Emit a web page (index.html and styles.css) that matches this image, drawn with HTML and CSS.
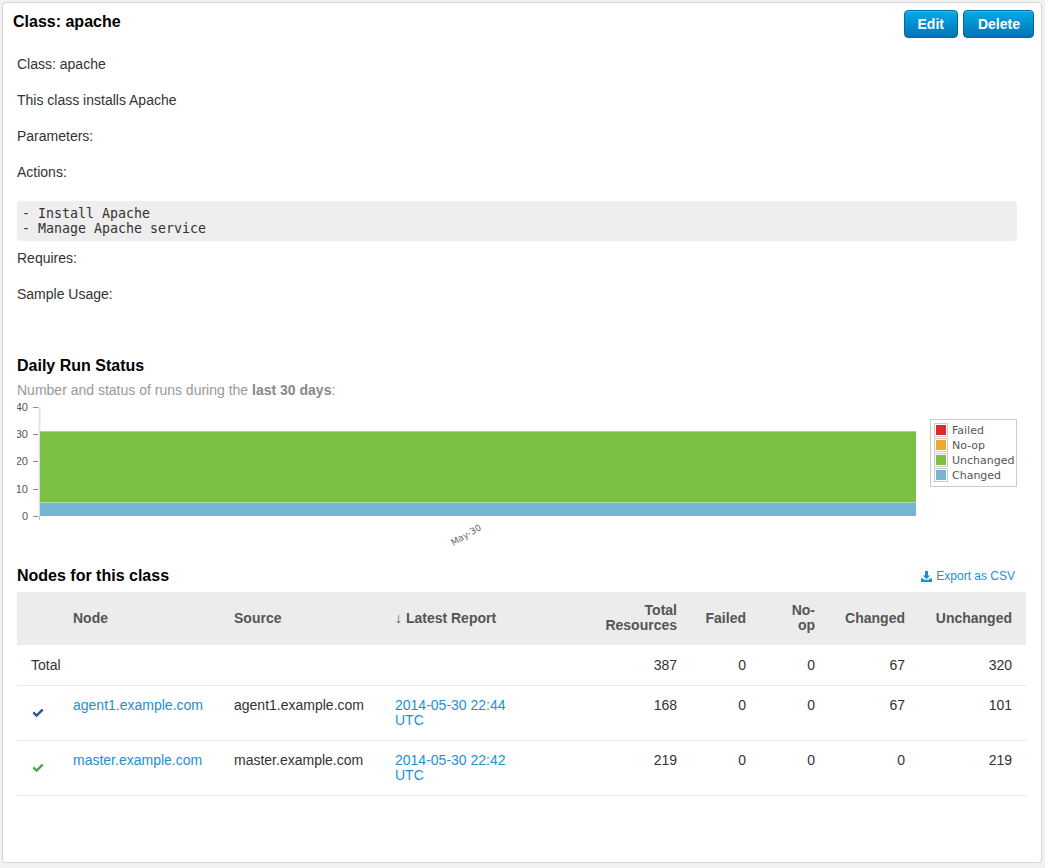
FILE: index.html
```html
<!DOCTYPE html>
<html>
<head>
<meta charset="utf-8">
<title>Class: apache</title>
<link rel="stylesheet" href="styles.css">
</head>
<body>
<div class="panel">
  <div class="panel-head">
    <h2 class="title">Class: apache</h2>
    <div class="actions">
      <a class="btn" href="#">Edit</a>
      <a class="btn btn-del" href="#">Delete</a>
    </div>
  </div>
  <div class="panel-body">
    <p>Class: apache</p>
    <p>This class installs Apache</p>
    <p>Parameters:</p>
    <p>Actions:</p>
    <pre class="code">- Install Apache
- Manage Apache service</pre>
    <p>Requires:</p>
    <p>Sample Usage:</p>

    <h3 class="section-title first">Daily Run Status</h3>
    <p class="sub">Number and status of runs during the <strong>last 30 days</strong>:</p>
    <svg class="chart" width="1009" height="150" viewBox="0 0 1009 150">
      <g class="ylabels">
        <text x="11" y="11">40</text>
        <text x="11" y="38">30</text>
        <text x="11" y="65">20</text>
        <text x="11" y="93">10</text>
        <text x="11" y="120">0</text>
      </g>
      <g stroke="#888" stroke-width="1">
        <line x1="16" x2="21" y1="7.5" y2="7.5"/>
        <line x1="16" x2="21" y1="34.5" y2="34.5"/>
        <line x1="16" x2="21" y1="61.5" y2="61.5"/>
        <line x1="16" x2="21" y1="89.5" y2="89.5"/>
        <line x1="16" x2="21" y1="116.5" y2="116.5"/>
      </g>
      <line x1="22.5" x2="22.5" y1="7" y2="119" stroke="#e2e2e2" stroke-width="2"/>
      <rect x="23" y="31" width="876" height="85" fill="#7ac043"/>
      <line x1="23" x2="899" y1="31.5" y2="31.5" stroke="#a9d685" stroke-width="1"/>
      <rect x="23" y="102" width="876" height="14" fill="#75b5d2"/>
      <line x1="23" x2="899" y1="102.5" y2="102.5" stroke="#b4d9b7" stroke-width="1"/>
      <line x1="22.5" x2="22.5" y1="116" y2="120" stroke="#bbb" stroke-width="1"/>
      <text class="xlabel" x="449" y="138" transform="rotate(-30 449 135)">May-30</text>
      <g class="legend">
        <rect x="913.5" y="19.5" width="86" height="67" fill="#fff" stroke="#ccc"/>
        <rect x="917.5" y="23.5" width="13" height="13" fill="#fff" stroke="#ccc"/>
        <rect x="919" y="25" width="10" height="10" fill="#dd2c2c"/>
        <rect x="917.5" y="38.5" width="13" height="13" fill="#fff" stroke="#ccc"/>
        <rect x="919" y="40" width="10" height="10" fill="#f0a92e"/>
        <rect x="917.5" y="53.5" width="13" height="13" fill="#fff" stroke="#ccc"/>
        <rect x="919" y="55" width="10" height="10" fill="#7ac043"/>
        <rect x="917.5" y="68.5" width="13" height="13" fill="#fff" stroke="#ccc"/>
        <rect x="919" y="70" width="10" height="10" fill="#75b5d2"/>
        <text x="935" y="34">Failed</text>
        <text x="935" y="49">No-op</text>
        <text x="935" y="64">Unchanged</text>
        <text x="935" y="79">Changed</text>
      </g>
    </svg>

    <div class="nodes-head">
      <h3 class="section-title">Nodes for this class</h3>
      <a class="export" href="#"><svg width="11" height="11" viewBox="0 0 11 11"><path d="M4 0h3v4.5h2.2L5.5 8.3 1.8 4.5H4z" fill="#1e90d0"/><path d="M0 7.5h2.2l1 1.2h4.6l1-1.2H11V11H0z" fill="#1e90d0"/></svg>Export as CSV</a>
    </div>

    <table class="nodes">
      <colgroup>
        <col class="c-icon"><col class="c-node"><col class="c-src"><col class="c-rep"><col class="c-tot"><col class="c-f"><col class="c-n"><col class="c-c"><col class="c-u">
      </colgroup>
      <thead>
        <tr>
          <th></th>
          <th>Node</th>
          <th>Source</th>
          <th>↓ Latest Report</th>
          <th class="num">Total<br>Resources</th>
          <th class="num">Failed</th>
          <th class="num">No-<br>op</th>
          <th class="num">Changed</th>
          <th class="num">Unchanged</th>
        </tr>
      </thead>
      <tbody>
        <tr class="total-row">
          <td colspan="4" class="total">Total</td>
          <td class="num">387</td>
          <td class="num">0</td>
          <td class="num">0</td>
          <td class="num">67</td>
          <td class="num">320</td>
        </tr>
        <tr>
          <td class="icon"><svg class="check blue" width="12" height="10" viewBox="0 0 12 10"><path d="M0.5 5.2 2.2 3.5 4.6 5.9 9.8 0.7 11.5 2.4 4.6 9.3z"/></svg></td>
          <td><a href="#">agent1.example.com</a></td>
          <td>agent1.example.com</td>
          <td><a href="#">2014-05-30 22:44<br>UTC</a></td>
          <td class="num">168</td>
          <td class="num">0</td>
          <td class="num">0</td>
          <td class="num">67</td>
          <td class="num">101</td>
        </tr>
        <tr>
          <td class="icon"><svg class="check green" width="12" height="10" viewBox="0 0 12 10"><path d="M0.5 5.2 2.2 3.5 4.6 5.9 9.8 0.7 11.5 2.4 4.6 9.3z"/></svg></td>
          <td><a href="#">master.example.com</a></td>
          <td>master.example.com</td>
          <td><a href="#">2014-05-30 22:42<br>UTC</a></td>
          <td class="num">219</td>
          <td class="num">0</td>
          <td class="num">0</td>
          <td class="num">0</td>
          <td class="num">219</td>
        </tr>
      </tbody>
    </table>
  </div>
</div>
</body>
</html>
```

FILE: styles.css
```css
html, body {
  margin: 0;
  padding: 0;
  background: #f1f1f1;
}
body {
  padding: 2px 0 0 2px;
  font-family: "Liberation Sans", Arial, sans-serif;
  font-size: 14px;
  color: #333;
}
.panel {
  width: 1038px;
  height: 859px;
  background: #fff;
  border: 1px solid #d6d6d6;
  border-radius: 4px;
}
.panel-head {
  display: flex;
  justify-content: space-between;
  align-items: flex-start;
  padding: 7px 7px 0 10px;
}
.title {
  margin: 0;
  font-size: 16px;
  line-height: 24px;
  font-weight: bold;
  color: #000;
}
.actions {
  display: flex;
  gap: 5px;
}
.btn {
  display: block;
  height: 26px;
  line-height: 26px;
  padding: 0 13px;
  border: 1px solid #0469a3;
  border-radius: 4px;
  background: linear-gradient(#03aaea, #0274b4);
  color: #fff;
  font-weight: bold;
  font-size: 14px;
  text-decoration: none;
  box-shadow: inset 0 1px 0 rgba(255,255,255,0.2);
}
.btn-del {
  padding: 0 13px 0 14px;
}
.panel-body {
  padding: 16px 15px 0 14px;
}
p {
  margin: 0 0 16px;
  line-height: 20px;
}
.code {
  margin: 19px 9px 7px 0;
  padding: 5px 5px;
  background: #eee;
  border-radius: 4px;
  font-family: "DejaVu Sans Mono", "Liberation Mono", monospace;
  font-size: 13.3px;
  line-height: 15px;
  color: #333;
}
.section-title {
  margin: 0;
  font-size: 16px;
  line-height: 20px;
  font-weight: bold;
  color: #000;
}
.section-title.first {
  margin-top: 52px;
}
.sub {
  margin: 4px 0 0;
  color: #999;
}
.sub strong {
  color: #888;
}
.chart {
  display: block;
  margin-top: 0;
}
.ylabels text {
  font-family: "Liberation Sans", Arial, sans-serif;
  font-size: 11px;
  fill: #555;
  text-anchor: end;
}
.xlabel {
  font-family: "DejaVu Sans", sans-serif;
  font-size: 9px;
  fill: #666;
  text-anchor: middle;
}
.legend text {
  font-family: "DejaVu Sans", sans-serif;
  font-size: 11px;
  fill: #555;
}
.nodes-head {
  display: flex;
  justify-content: space-between;
  align-items: center;
  margin-top: 16px;
  padding-right: 11px;
}
.export {
  display: flex;
  align-items: center;
  gap: 4px;
  color: #1e90d0;
  font-size: 12px;
  text-decoration: none;
}
.nodes {
  width: 1009px;
  margin-top: 6px;
  border-collapse: collapse;
  table-layout: fixed;
}
.c-icon { width: 48px; }
.c-node { width: 161px; }
.c-src { width: 161px; }
.c-rep { width: 138px; }
.c-tot { width: 160px; }
.c-f { width: 69px; }
.c-n { width: 69px; }
.c-c { width: 90px; }
.c-u { width: 113px; }
.nodes th {
  background: #ececec;
  color: #555;
  font-weight: bold;
  text-align: left;
  vertical-align: middle;
  line-height: 15px;
  padding: 11px 8px 12px;
  height: 30px;
}
.nodes td {
  padding: 12px 8px;
  line-height: 15px;
  vertical-align: top;
  border-bottom: 1px solid #e6e6e6;
}
.nodes .total-row td {
  padding-top: 13px;
  padding-bottom: 12px;
}
.nodes th:first-child {
  padding: 0;
}
.nodes .num {
  text-align: right;
}
.nodes th:last-child, .nodes td:last-child {
  padding-right: 14px;
}
.nodes td.icon {
  vertical-align: middle;
  padding-left: 15px;
}
.nodes td.total {
  padding-left: 14px;
}
.nodes a {
  color: #1e90d0;
  text-decoration: none;
}
.check {
  display: block;
}
.check.blue { fill: #2d4f93; }
.check.green { fill: #49a546; }
```
